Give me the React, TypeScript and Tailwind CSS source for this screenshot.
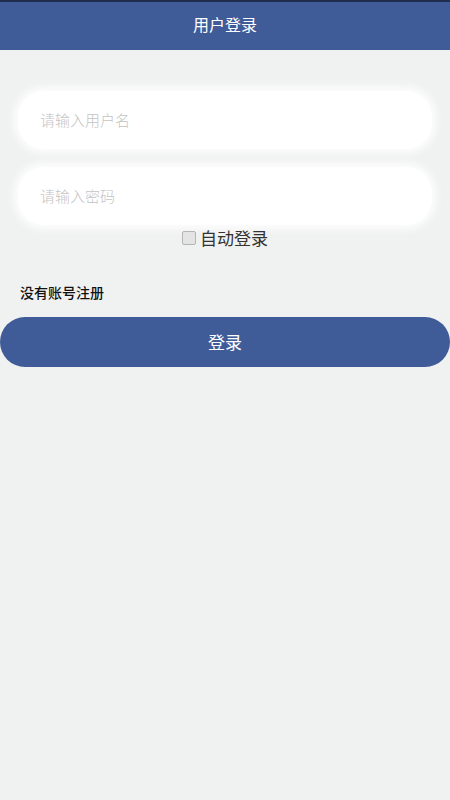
export default function App() {
  return (
    <div
      className="min-h-[800px] w-full bg-[#f0f1f1]"
      style={{ fontFamily: '"Noto Sans CJK SC", "Noto Sans", sans-serif' }}
    >
      {/* Header */}
      <header className="flex h-[50px] items-center justify-center border-t-2 border-[#1f2d4d] bg-[#3f5b98] pb-[4px] text-[16px] text-white">
        用户登录
      </header>

      {/* Form */}
      <div className="px-[18px] pt-[41px]">
        <div className="flex h-[58px] items-center rounded-[26px] bg-white px-[22px] shadow-[0_0_8px_4px_rgba(255,255,255,0.9)]">
          <input
            autoFocus
            placeholder="请输入用户名"
            className="w-full bg-transparent text-[15px] font-light text-[#333] caret-[#333] outline-none placeholder:text-[#c4c4c4]"
          />
        </div>
        <div className="mt-[18px] flex h-[58px] items-center rounded-[26px] bg-white px-[22px] shadow-[0_0_8px_4px_rgba(255,255,255,0.9)]">
          <input
            type="password"
            placeholder="请输入密码"
            className="w-full bg-transparent text-[15px] font-light text-[#333] outline-none placeholder:text-[#c4c4c4]"
          />
        </div>
      </div>

      {/* Auto login */}
      <label className="flex items-center justify-center gap-[4px] text-[17px] text-[#333]">
        <span className="h-[14px] w-[14px] rounded-[2px] border border-[#b5b5b5] bg-[#e4e4e4]" />
        自动登录
      </label>

      {/* Register link */}
      <div className="mt-[31px] px-[20px] text-[14px] font-medium text-[#111]">
        没有账号注册
      </div>

      {/* Login button */}
      <button className="mt-[14px] flex h-[50px] w-full items-center justify-center rounded-full bg-[#3f5b98] text-[17px] text-white">
        登录
      </button>
    </div>
  );
}
